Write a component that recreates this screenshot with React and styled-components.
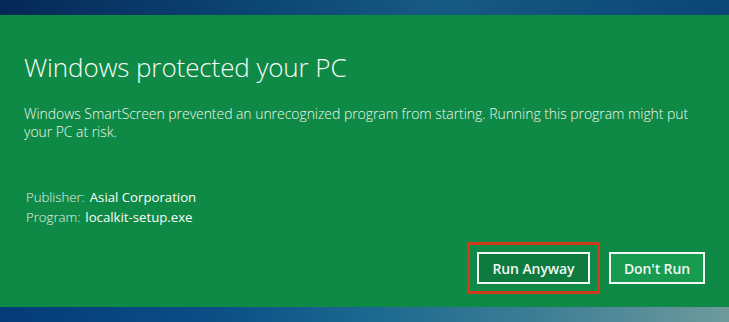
import React from "react";
import styled, { createGlobalStyle } from "styled-components";

const GlobalStyle = createGlobalStyle`
  html, body {
    margin: 0;
    padding: 0;
    background: #0b3f73;
  }
  body {
    font-family: "Open Sans", "Noto Sans", sans-serif;
  }
`;

const Screen = styled.div`
  width: 729px;
  height: 322px;
  display: flex;
  flex-direction: column;
  overflow: hidden;
`;

const Backdrop = styled.div`
  height: ${(p) => p.h}px;
  flex: none;
  background: ${(p) => p.bg};
`;

const Dialog = styled.div`
  flex: 1;
  background: #0f8a46;
  color: #f2f7f2;
  padding: 34px 24px 0 24px;
  display: flex;
  flex-direction: column;
`;

const Title = styled.h1`
  margin: 0;
  font-family: "Open Sans", sans-serif;
  font-weight: 300;
  font-size: 26px;
  line-height: 36px;
  letter-spacing: -0.1px;
  color: #f7fbf7;
`;

const Message = styled.p`
  margin: 20px 0 0 0;
  font-size: 14px;
  line-height: 18px;
  font-weight: 300;
  letter-spacing: -0.05px;
  max-width: 681px;
  color: #eef6ee;
`;

const Details = styled.div`
  margin-top: 46px;
  display: flex;
  flex-direction: column;
  font-size: 13.2px;
  line-height: 20px;
  padding-left: 2px;
`;

const DetailRow = styled.div`
  display: flex;
  gap: 5px;
`;

const Label = styled.span`
  font-weight: 300;
  color: #e6f1e8;
`;

const Value = styled.span`
  font-weight: 400;
  color: #fbfdfb;
`;

const Actions = styled.div`
  margin-top: auto;
  padding-bottom: 13px;
  display: flex;
  justify-content: flex-end;
  align-items: center;
  gap: 9px;
`;

const Highlight = styled.div`
  border: 3px solid #cf3a1c;
  padding: 7px;
  display: flex;
`;

const Button = styled.button`
  height: 32px;
  min-width: ${(p) => p.w}px;
  padding: 0 10px;
  border: 2px solid #f3f7f3;
  background: ${(p) => (p.primary ? "#0e7a40" : "#179b50")};
  color: #f2f7f2;
  font-family: "Open Sans", sans-serif;
  font-weight: 600;
  font-size: 14px;
  letter-spacing: -0.1px;
  cursor: pointer;
`;

export default function App() {
  return (
    <>
      <GlobalStyle />
      <Screen>
        <Backdrop
          h={15}
          bg="linear-gradient(90deg, #052858 0%, #0c4673 35%, #165a82 60%, #0f4d7a 85%, #0b4674 100%)"
        />
        <Dialog>
          <Title>Windows protected your PC</Title>
          <Message>
            Windows SmartScreen prevented an unrecognized program from starting.
            Running this program might put your PC at risk.
          </Message>
          <Details>
            <DetailRow>
              <Label>Publisher:</Label>
              <Value>Asial Corporation</Value>
            </DetailRow>
            <DetailRow>
              <Label>Program:</Label>
              <Value>localkit-setup.exe</Value>
            </DetailRow>
          </Details>
          <Actions>
            <Highlight>
              <Button primary w={113}>Run Anyway</Button>
            </Highlight>
            <Button w={96}>Don't Run</Button>
          </Actions>
        </Dialog>
        <Backdrop
          h={15}
          bg="linear-gradient(90deg, #053b78 0%, #0b4f86 30%, #1a6890 50%, #3f7f96 75%, #6e9a9c 100%)"
        />
      </Screen>
    </>
  );
}
